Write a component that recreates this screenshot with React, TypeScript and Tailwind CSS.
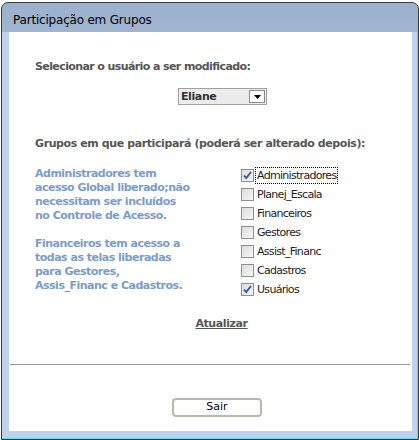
import React, { useState } from 'react';

const grupos = ['Administradores', 'Planej_Escala', 'Financeiros', 'Gestores', 'Assist_Financ', 'Cadastros', 'Usuários'];

const font = { fontFamily: '"DejaVu Sans", Verdana, sans-serif' };

const App = () => {
  const [marcados, setMarcados] = useState<string[]>(['Administradores', 'Usuários']);

  const toggle = (g: string) =>
    setMarcados((m) => (m.includes(g) ? m.filter((x) => x !== g) : [...m, g]));

  return (
    <div className="w-[419px] h-[440px] bg-white pt-[2px] pl-[1px]">
      <div className="w-[418px] h-[438px] rounded-t-[7px] border border-[#3a3a3a] bg-gradient-to-b from-[#9bb1cd] via-[#b7cde6] to-[#bfd4ec] flex flex-col">
        {/* title bar */}
        <div className="h-[29px] shrink-0 pl-[11px] pt-[10px] text-[12px] leading-[14px] text-black font-['DejaVu_Sans',sans-serif] tracking-[-0.2px]">
          Participação em Grupos
        </div>

        <div className="flex-1 px-[7px] pb-[6px] bg-[#bfd4ec] border-r border-b border-[#63d7ee]">
          {/* content */}
          <div className="w-[403px] h-[399px] bg-white flex flex-col text-[11px]" style={font}>
            <div className="pl-[26px] pt-[27px] font-bold text-[#555555] leading-[16px] tracking-[-0.6px]">
              Selecionar o usuário a ser modificado:
            </div>

            <div className="pl-[169px] mt-[13px]">
              <div className="w-[89px] h-[17px] border border-[#a0a0a0] bg-[#ececec] flex items-center justify-between">
                <span className="pl-[2px] font-bold text-[#333333] text-[11px] leading-[15px] tracking-[-0.4px]">Eliane</span>
                <span className="w-[16px] h-[13px] mr-[1px] border border-[#8a8a8a] bg-white flex items-center justify-center">
                  <svg width="7" height="4" viewBox="0 0 7 4">
                    <path d="M0 0h7L3.5 4z" fill="#000" />
                  </svg>
                </span>
              </div>
            </div>

            <div className="pl-[26px] mt-[31px] font-bold text-[#555555] leading-[16px] tracking-[-0.4px]">
              Grupos em que participará (poderá ser alterado depois):
            </div>

            <div className="flex mt-[14px]">
              <div className="w-[232px] pl-[26px] pt-[1px] font-bold text-[#7b9cc8] leading-[14px] tracking-[-0.5px]">
                <p>
                  Administradores tem
                  <br />
                  acesso Global liberado;não
                  <br />
                  necessitam ser incluídos
                  <br />
                  no Controle de Acesso.
                </p>
                <p className="mt-[14px]">
                  Financeiros tem acesso a
                  <br />
                  todas as telas liberadas
                  <br />
                  para Gestores,
                  <br />
                  Assis_Financ e Cadastros.
                </p>
              </div>

              <div className="flex flex-col">
                {grupos.map((g, i) => {
                  const on = marcados.includes(g);
                  return (
                    <label key={g} className="h-[19px] flex items-center cursor-pointer" onClick={() => toggle(g)}>
                      <span className="w-[13px] h-[13px] border border-[#8e8f8f] bg-gradient-to-br from-[#dcdcdc] to-[#f8f8f8] flex items-center justify-center">
                        {on && (
                          <svg width="9" height="9" viewBox="0 0 9 9">
                            <path d="M1 4.5l2.2 2.5L8 1" stroke="#2a4fb0" strokeWidth="1.8" fill="none" />
                          </svg>
                        )}
                      </span>
                      <span
                        className={
                          'ml-[1px] px-[1px] leading-[15px] text-[#222222] tracking-[-0.7px] ' +
                          (i === 0 ? 'border border-dotted border-black' : 'border border-transparent')
                        }
                      >
                        {g}
                      </span>
                    </label>
                  );
                })}
              </div>
            </div>

            <div className="mt-[17px] text-center pl-[22px]">
              <a className="font-bold text-[#555555] underline leading-[14px] tracking-[-0.4px] cursor-pointer">Atualizar</a>
            </div>

            <div className="mt-[31px] ml-[1px] mr-[2px] h-px bg-[#9a9a9a]" />

            <div className="pl-[163px] mt-[33px]">
              <button className="w-[90px] h-[19px] rounded-[4px] border-2 border-[#b9b9ab] bg-white text-[11px] leading-[14px] text-black">
                Sair
              </button>
            </div>
          </div>
        </div>
      </div>
    </div>
  );
};

export default App;
